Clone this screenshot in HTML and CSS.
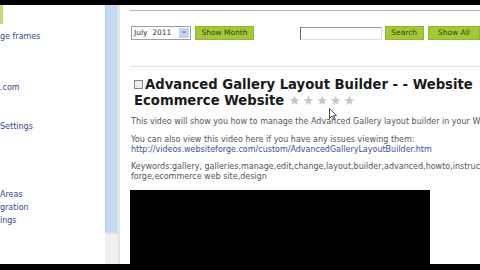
FILE: index.html
```html
<!DOCTYPE html>
<html>
<head>
    <meta charset="utf-8" />
    <title>Video Gallery</title>
    <link rel="stylesheet" href="styles.css">
</head>
<body>
    <div class="screen">
        <div class="topbar"></div>
        <div class="window">
            <div class="sidebar">
                <div class="greenmark"></div>
                <ul class="nav">
                    <li class="n1">ge frames</li>
                    <li class="n2">.com</li>
                    <li class="n3">Settings</li>
                    <li class="n4">Areas</li>
                    <li class="n5">gration</li>
                    <li class="n6">ings</li>
                </ul>
            </div>
            <div class="scroll">
                <div class="thumb"></div>
                <div class="track"></div>
            </div>
            <div class="sep"></div>
            <div class="main">
                <div class="rule-top"></div>
                <div class="controls">
                    <div class="select">July&nbsp; 2011 <span class="arrow">&#8964;</span></div>
                    <div class="btn btn-month">Show Month</div>
                    <div class="searchbox"></div>
                    <div class="btn btn-search">Search</div>
                    <div class="btn btn-all">Show All</div>
                </div>
                <div class="rule-mid"></div>
                <h1 class="title"><span class="check"></span>Advanced Gallery Layout Builder - - Website<br>Ecommerce Website <span class="stars">&#9733;&#9733;&#9733;&#9733;&#9733;</span></h1>
                <p class="desc d1">This video will show you how to manage the Advanced Gallery layout builder in your Website</p>
                <p class="desc d2">You can also view this video here if you have any issues viewing them:<br><span class="link">http://videos.websiteforge.com/custom/AdvancedGalleryLayoutBuilder.htm</span></p>
                <p class="desc d3">Keywords:gallery, galleries,manage,edit,change,layout,builder,advanced,howto,instructions,website<br>forge,ecommerce web site,design</p>
                <div class="video"></div>
                <svg class="cursor" width="8" height="13" viewBox="0 0 8 13"><path d="M0.5 0.5 L0.5 10.5 L3 8 L5 12 L6.3 11.4 L4.4 7.6 L7.5 7.6 Z" fill="#fff" stroke="#222" stroke-width="0.8"/></svg>
            </div>
        </div>
        <div class="bottombar"></div>
    </div>
</body>
</html>
```

FILE: styles.css
```css
* {
    margin: 0;
    padding: 0;
    box-sizing: border-box;
}

body {
    width: 480px;
    height: 270px;
    overflow: hidden;
    background: #fff;
    font-family: "DejaVu Sans", Verdana, sans-serif;
}

.screen {
    display: flex;
    flex-direction: column;
    height: 270px;
}

.topbar {
    height: 5px;
    background: #000;
}

.bottombar {
    height: 6px;
    background: #000;
}

.window {
    flex: 1;
    display: flex;
    overflow: hidden;
}

.sidebar {
    width: 105px;
    position: relative;
    background: #fff;
}

.greenmark {
    position: absolute;
    left: 0;
    top: 0;
    width: 3px;
    height: 19px;
    background: #c9d873;
}

.nav {
    list-style: none;
    font-size: 8px;
    color: #34478a;
    line-height: 10px;
}

.nav li {
    height: 10px;
}

.n1 { margin-top: 27px; }
.n2 { margin-top: 41px; }
.n3 { margin-top: 29px; }
.n4 { margin-top: 58px; }
.n5 { margin-top: 3px; }
.n6 { margin-top: 3px; }

.scroll {
    width: 13px;
    display: flex;
    flex-direction: column;
}

.thumb {
    height: 227px;
    background: #c5d9ef;
    border-left: 1px solid #b3cbe6;
    border-right: 1px solid #d9e6f5;
}

.track {
    flex: 1;
    background: #eef0f3;
    border-top: 2px solid #d5dde8;
}

.sep {
    width: 2px;
    background: #e4e4e4;
}

.main {
    flex: 1;
    position: relative;
    overflow: hidden;
    padding-left: 10px;
    white-space: nowrap;
}

.rule-top {
    margin-top: 5px;
    border-top: 1px solid #b4b4b4;
}

.controls {
    display: flex;
    margin-top: 15px;
    margin-left: 1px;
    height: 14px;
    font-size: 7.5px;
}

.select {
    width: 63px;
    height: 14px;
    border: 1px solid #8e9fb6;
    line-height: 12px;
    padding-left: 2px;
    color: #333;
    position: relative;
}

.arrow {
    position: absolute;
    right: 1px;
    top: 1px;
    width: 10px;
    height: 10px;
    background: #c3d3ea;
    color: #3a5a9a;
    font-size: 8px;
    line-height: 6px;
    text-align: center;
}

.btn {
    height: 14px;
    background: #a3c939;
    border: 1px solid #92b52f;
    color: #2d4a14;
    line-height: 12px;
    text-align: center;
}

.btn-month {
    width: 62px;
    margin-left: 4px;
}

.searchbox {
    width: 86px;
    height: 13px;
    margin-top: 1px;
    margin-left: 46px;
    border: 1px solid #999;
    border-left-color: #666;
    border-right-color: #ddd;
    border-bottom-color: #ddd;
}

.btn-search {
    width: 41px;
    margin-left: 3px;
}

.btn-all {
    width: 55px;
    margin-left: 4px;
}

.rule-mid {
    margin-top: 26px;
    border-top: 1px solid #e2e2e2;
}

.title {
    margin-top: 10px;
    margin-left: 4px;
    font-size: 13.2px;
    line-height: 16px;
    font-weight: bold;
    color: #1a1a1a;
}

.check {
    display: inline-block;
    width: 9px;
    height: 9px;
    border: 1px solid #888;
    background: #eee;
    margin-right: 2px;
}

.stars {
    font-size: 13px;
    font-weight: normal;
    color: #c4c4c4;
    letter-spacing: 2px;
}

.desc {
    margin-left: 1px;
    font-size: 8px;
    line-height: 10px;
    color: #555;
}

.d1 {
    margin-top: 8px;
}

.d2 {
    margin-top: 8px;
}

.d3 {
    margin-top: 7px;
}

.link {
    color: #3a4f96;
}

.video {
    margin-top: 8px;
    width: 300px;
    height: 80px;
    background: #000;
}

.cursor {
    position: absolute;
    left: 209px;
    top: 103px;
}
```
